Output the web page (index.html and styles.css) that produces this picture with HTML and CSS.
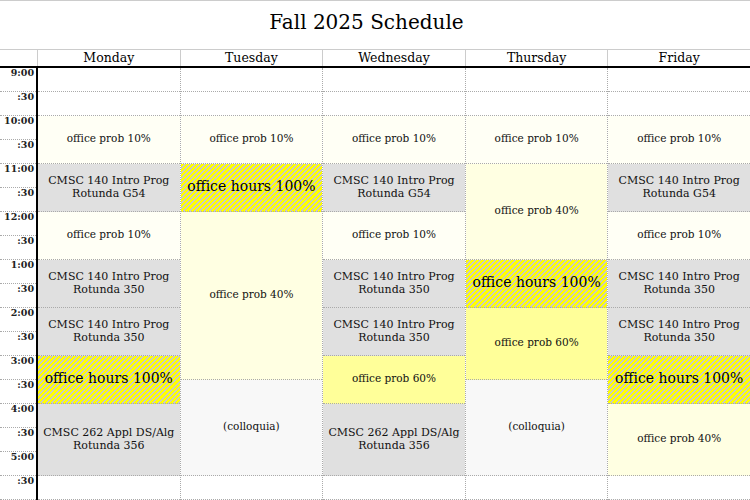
FILE: index.html
```html
<!DOCTYPE html>
<html>
<head>
<meta charset="utf-8">
<link rel="stylesheet" href="styles.css">
</head>
<body>
<div class="page">
  <h1 class="title">Fall 2025 Schedule</h1>
  <div class="head">
    <div class="corner"></div>
    <div class="dname">Monday</div>
    <div class="dname">Tuesday</div>
    <div class="dname">Wednesday</div>
    <div class="dname">Thursday</div>
    <div class="dname">Friday</div>
  </div>
  <div class="grid">
    <div class="times">
      <div class="t">9:00</div><div class="t">:30</div>
      <div class="t">10:00</div><div class="t">:30</div>
      <div class="t">11:00</div><div class="t">:30</div>
      <div class="t">12:00</div><div class="t">:30</div>
      <div class="t">1:00</div><div class="t">:30</div>
      <div class="t">2:00</div><div class="t">:30</div>
      <div class="t">3:00</div><div class="t">:30</div>
      <div class="t">4:00</div><div class="t">:30</div>
      <div class="t">5:00</div><div class="t">:30</div>
    </div>

    <div class="day">
      <div class="c"></div><div class="c"></div>
      <div class="c p10 s2">office prob 10%</div>
      <div class="c cls s2">CMSC 140 Intro Prog<br>Rotunda G54</div>
      <div class="c p10 s2">office prob 10%</div>
      <div class="c cls s2">CMSC 140 Intro Prog<br>Rotunda 350</div>
      <div class="c cls s2">CMSC 140 Intro Prog<br>Rotunda 350</div>
      <div class="c oh s2">office hours 100%</div>
      <div class="c cls s3">CMSC 262 Appl DS/Alg<br>Rotunda 356</div>
      <div class="c"></div>
    </div>

    <div class="day">
      <div class="c"></div><div class="c"></div>
      <div class="c p10 s2">office prob 10%</div>
      <div class="c oh s2">office hours 100%</div>
      <div class="c p40 s7">office prob 40%</div>
      <div class="c coll s4">(colloquia)</div>
      <div class="c"></div>
    </div>

    <div class="day">
      <div class="c"></div><div class="c"></div>
      <div class="c p10 s2">office prob 10%</div>
      <div class="c cls s2">CMSC 140 Intro Prog<br>Rotunda G54</div>
      <div class="c p10 s2">office prob 10%</div>
      <div class="c cls s2">CMSC 140 Intro Prog<br>Rotunda 350</div>
      <div class="c cls s2">CMSC 140 Intro Prog<br>Rotunda 350</div>
      <div class="c p60 s2">office prob 60%</div>
      <div class="c cls s3">CMSC 262 Appl DS/Alg<br>Rotunda 356</div>
      <div class="c"></div>
    </div>

    <div class="day">
      <div class="c"></div><div class="c"></div>
      <div class="c p10 s2">office prob 10%</div>
      <div class="c p40 s4">office prob 40%</div>
      <div class="c oh s2">office hours 100%</div>
      <div class="c p60 s3">office prob 60%</div>
      <div class="c coll s4">(colloquia)</div>
      <div class="c"></div>
    </div>

    <div class="day">
      <div class="c"></div><div class="c"></div>
      <div class="c p10 s2">office prob 10%</div>
      <div class="c cls s2">CMSC 140 Intro Prog<br>Rotunda G54</div>
      <div class="c p10 s2">office prob 10%</div>
      <div class="c cls s2">CMSC 140 Intro Prog<br>Rotunda 350</div>
      <div class="c cls s2">CMSC 140 Intro Prog<br>Rotunda 350</div>
      <div class="c oh s2">office hours 100%</div>
      <div class="c p40 s3">office prob 40%</div>
      <div class="c"></div>
    </div>
  </div>
</div>
</body>
</html>
```
FILE: styles.css
```css
html, body {
  margin: 0;
  padding: 0;
  background: #fff;
  overflow: hidden;
}
body {
  font-family: "DejaVu Serif", "Liberation Serif", serif;
  color: #111;
}
.page {
  width: 751px;
}
.title {
  box-sizing: border-box;
  height: 49px;
  margin: 0;
  padding-right: 18px;
  border-top: 1px solid #ccc;
  font-size: 20px;
  font-weight: normal;
  line-height: 43px;
  text-align: center;
  color: #000;
}
.head {
  box-sizing: border-box;
  height: 19px;
  display: grid;
  grid-template-columns: 38px repeat(5, 1fr);
  border-top: 1px solid #ccc;
  border-bottom: 2px solid #000;
}
.corner {
  border-right: 1px solid #ccc;
}
.dname {
  border-right: 1px solid #ccc;
  text-align: center;
  font-size: 12.5px;
  line-height: 16px;
  padding-top: 0;
  color: #000;
}
.grid {
  display: grid;
  grid-template-columns: 38px repeat(5, 1fr);
}
.times {
  display: grid;
  grid-template-rows: repeat(18, 24px);
  border-right: 2px solid #000;
}
.t {
  border-bottom: 1px dotted #aaa;
  text-align: right;
  padding-right: 2px;
  font-size: 9.5px;
  font-weight: 600;
  line-height: 10px;
  color: #222;
}
.day {
  display: grid;
  grid-template-rows: repeat(18, 24px);
  border-right: 1px dotted #aaa;
}
.c {
  box-sizing: border-box;
  border-bottom: 1px dotted #aaa;
  padding-bottom: 2px;
  display: flex;
  align-items: center;
  justify-content: center;
  text-align: center;
  font-size: 10.5px;
  line-height: 13px;
}
.s2 { grid-row: span 2; }
.s3 { grid-row: span 3; }
.s4 { grid-row: span 4; }
.s7 { grid-row: span 7; }
.p10 { background: #fffff5; }
.p40 { background: #ffffe2; }
.p60 { background: #ffff99; }
.cls { background: #e0e0e0; font-size: 11px; }
.coll { background: #f8f8f8; }
.oh {
  background: repeating-linear-gradient(135deg, #ffff00 0 2.2px, #c8c8c8 2.2px 3.6px);
  font-size: 14px;
  color: #000;
}
```
